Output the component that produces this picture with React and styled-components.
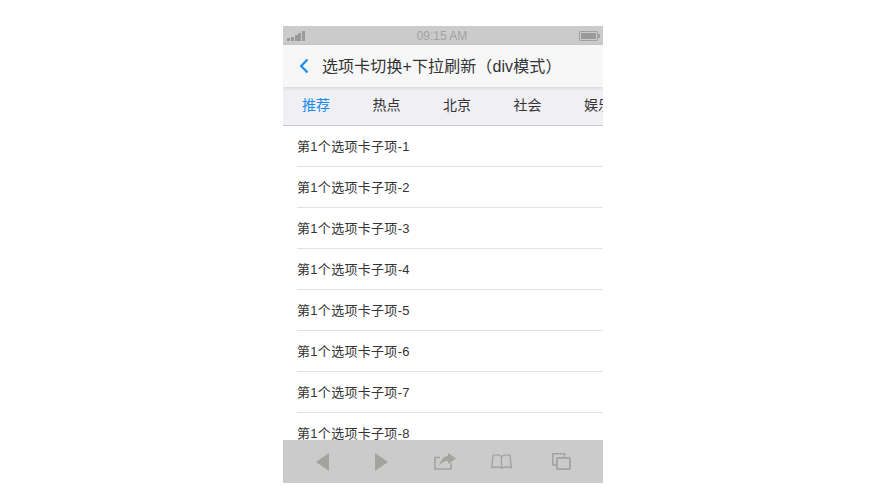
import React from 'react'
import styled, { createGlobalStyle } from 'styled-components'

const GlobalStyle = createGlobalStyle`
  html, body {
    margin: 0;
    padding: 0;
    background: #fff;
  }
  body {
    font-family: "Liberation Sans", "Noto Sans CJK SC", sans-serif;
  }
`

const tabs = ['推荐', '热点', '北京', '社会', '娱乐', '军事']
const items = [1, 2, 3, 4, 5, 6, 7, 8, 9]

const Page = () => (
  <Wrapper>
    <GlobalStyle />
    <Phone>
      <StatusBar>
        <Signal>
          {[3, 4, 6, 8, 10].map(h => (
            <SignalBar key={h} $height={h} />
          ))}
        </Signal>
        <Clock>09:15 AM</Clock>
        <Battery>
          <BatteryFill />
        </Battery>
      </StatusBar>
      <NavBar>
        <BackIcon width="10" height="16" viewBox="0 0 10 16">
          <path d="M8.5 1.5 L2.2 8 L8.5 14.5" fill="none" stroke="#1a8cf0" strokeWidth="2.2" />
        </BackIcon>
        <Title>选项卡切换+下拉刷新（div模式）</Title>
      </NavBar>
      <TabBar>
        {tabs.map((tab, i) => (
          <Tab key={tab} $active={i === 0}>{tab}</Tab>
        ))}
      </TabBar>
      <List>
        {items.map(n => (
          <Row key={n}>
            <RowText>第1个选项卡子项-{n}</RowText>
          </Row>
        ))}
      </List>
      <BottomBar>
        <ToolIcon $left={33} width="13" height="18" viewBox="0 0 13 18">
          <path d="M13 0 V18 L0 9 Z" fill="#a3a3a0" />
        </ToolIcon>
        <ToolIcon $left={46} width="13" height="18" viewBox="0 0 13 18">
          <path d="M0 0 V18 L13 9 Z" fill="#a3a3a0" />
        </ToolIcon>
        <ToolIcon $left={46} width="22" height="17" viewBox="0 0 22 17">
          <path d="M6 4.5 H1 V16 H17 V10" fill="none" stroke="#a3a3a0" strokeWidth="1.6" />
          <path d="M14 0 L22 5.5 L14 11 V8 C10 8 7 9.5 5.5 13 C6 8 9 3.5 14 3 Z" fill="#a3a3a0" />
        </ToolIcon>
        <ToolIcon $left={35} width="21" height="15" viewBox="0 0 21 15">
          <path
            d="M10.5 2.5 C8.5 1 5 0.6 2 1.4 L0.8 13.6 C4.5 12.6 8 12.8 10.5 14.2 C13 12.8 16.5 12.6 20.2 13.6 L19 1.4 C16 0.6 12.5 1 10.5 2.5 Z M10.5 2.5 V14.2"
            fill="none"
            stroke="#a3a3a0"
            strokeWidth="1.4"
          />
        </ToolIcon>
        <ToolIcon $left={40} width="19" height="17" viewBox="0 0 19 17">
          <path d="M4 12 H0.8 V0.8 H12.5 V4" fill="none" stroke="#a3a3a0" strokeWidth="1.5" />
          <rect x="5" y="4.8" width="13" height="11.4" rx="1" fill="none" stroke="#a3a3a0" strokeWidth="1.8" />
        </ToolIcon>
      </BottomBar>
    </Phone>
  </Wrapper>
)

export default Page

// Styles
const Wrapper = styled.div`
  display: flex;
  justify-content: center;
  width: 888px;
  height: 500px;
  padding-top: 26px;
  box-sizing: border-box;
  overflow: hidden;
`

const Phone = styled.div`
  display: flex;
  flex-direction: column;
  width: 320px;
  height: 457px;
  margin-left: -2px;
  overflow: hidden;
`

const StatusBar = styled.div`
  display: flex;
  align-items: center;
  justify-content: space-between;
  flex: none;
  height: 19px;
  padding: 0 4px;
  background: #cbcbcb;
`

const Signal = styled.div`
  display: flex;
  align-items: flex-end;
  gap: 0.75px;
  width: 20px;
  height: 10px;
`

const SignalBar = styled.span`
  width: 3px;
  height: ${p => p.$height}px;
  background: #9a9a98;
`

const Clock = styled.span`
  margin-right: 2px;
  font-size: 12px;
  color: #a2a2a2;
`

const Battery = styled.div`
  position: relative;
  display: flex;
  width: 19px;
  height: 10px;
  margin-right: 1px;
  padding: 1px;
  border: 1px solid #a0a09e;
  border-radius: 1px;
  box-sizing: border-box;

  &::after {
    content: '';
    position: absolute;
    right: -3px;
    top: 2px;
    width: 2px;
    height: 4px;
    background: #a0a09e;
  }
`

const BatteryFill = styled.div`
  flex: 1;
  background: #9a9a98;
`

const NavBar = styled.div`
  position: relative;
  z-index: 1;
  display: flex;
  align-items: center;
  gap: 13px;
  flex: none;
  height: 42px;
  padding-left: 16px;
  background: #f7f7f8;
  box-shadow: 0 1px 4px rgba(0, 0, 0, 0.12);
`

const BackIcon = styled.svg`
  flex: none;
`

const Title = styled.span`
  margin-bottom: 2px;
  font-size: 16px;
  letter-spacing: 0.1px;
  color: #333;
  white-space: nowrap;
`

const TabBar = styled.div`
  display: flex;
  flex: none;
  height: 39px;
  padding-left: 19px;
  padding-bottom: 5px;
  gap: 28px;
  align-items: center;
  background: #efeff4;
  border-bottom: 1px solid #c8c7cc;
  box-sizing: border-box;
  overflow: hidden;
`

const Tab = styled.span`
  flex: none;
  width: 42.5px;
  font-size: 14px;
  color: ${p => (p.$active ? '#1a8cf0' : '#333')};
  white-space: nowrap;
`

const List = styled.div`
  flex: 1;
  min-height: 0;
  padding-left: 14px;
  background: #fff;
  overflow: hidden;
`

const Row = styled.div`
  display: flex;
  align-items: center;
  height: 40px;
  font-size: 13px;
  color: #333;
  border-bottom: 1px solid #e2e2e2;
`

const RowText = styled.span`
  margin-bottom: 2px;
  letter-spacing: 0.3px;
`

const BottomBar = styled.div`
  display: flex;
  align-items: center;
  flex: none;
  height: 43px;
  background: #cbcbcb;
`

const ToolIcon = styled.svg`
  flex: none;
  margin-left: ${p => p.$left}px;
`
